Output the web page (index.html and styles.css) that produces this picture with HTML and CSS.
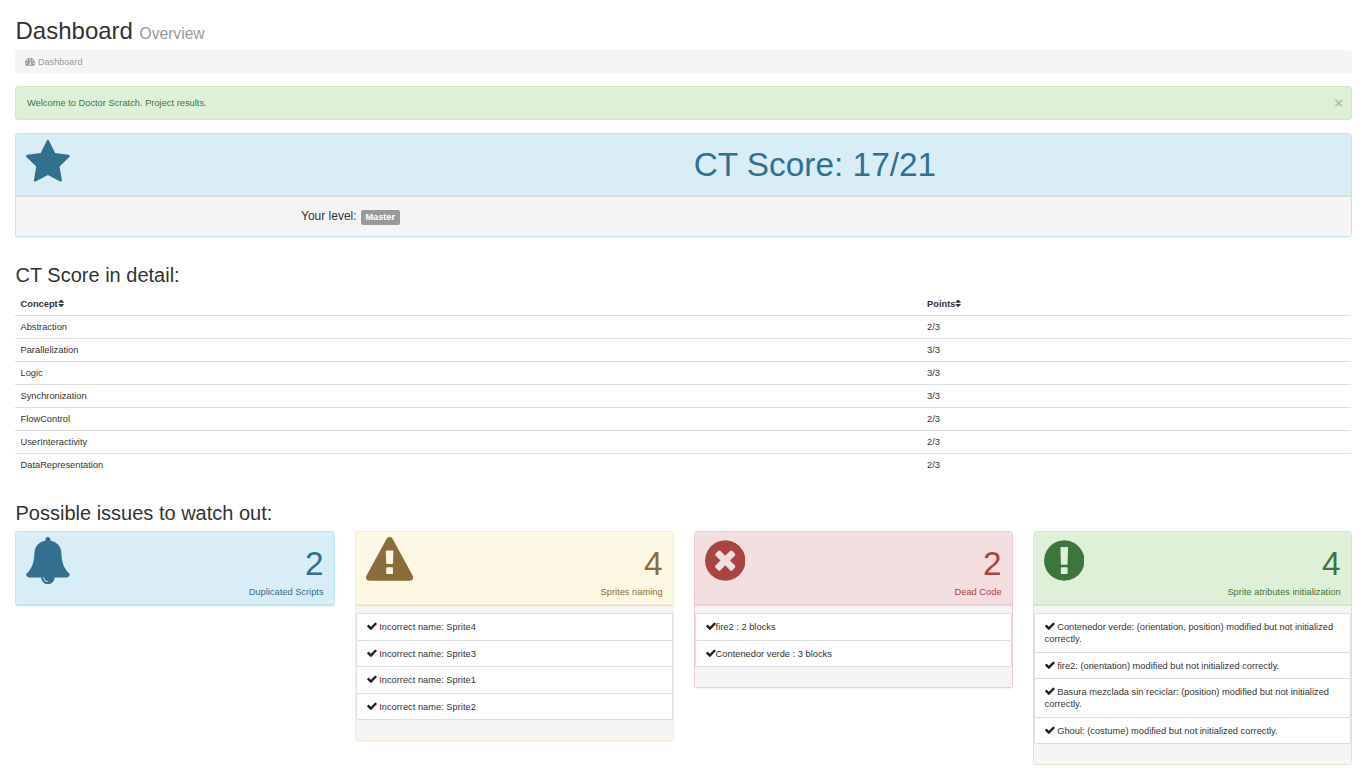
FILE: index.html
```html
<!DOCTYPE html>
<html lang="en">
<head>
    <meta charset="UTF-8">
    <meta name="viewport" content="width=device-width, initial-scale=1.0">
    <title>Doctor Scratch - Dashboard</title>
    <link rel="stylesheet" href="styles.css">
</head>
<body>
    <div class="page">
        <h1 class="page-title">Dashboard <small>Overview</small></h1>
        <div class="breadcrumb">
            <svg class="fa-dash" viewBox="0 128 1792 1536"><path fill="currentColor" d="M384 1152q0-53-37.500-90.500t-90.500-37.500-90.500 37.500-37.500 90.500 37.500 90.500 90.500 37.500 90.500-37.500 37.500-90.500zm192-448q0-53-37.500-90.500t-90.500-37.500-90.500 37.500-37.500 90.500 37.500 90.500 90.500 37.500 90.500-37.500 37.500-90.500zm428 481l101-382q6-26-7.500-48.500t-38.500-29.500-48 6.500-30 39.500l-101 382q-60 5-107 43.500t-63 98.500q-20 77 20 146t117 89 146-20 89-117q16-60-6-117t-72-91zm660-33q0-53-37.500-90.500t-90.500-37.500-90.500 37.500-37.500 90.500 37.500 90.500 90.500 37.500 90.500-37.500 37.500-90.500zm-640-640q0-53-37.500-90.500t-90.500-37.500-90.500 37.500-37.500 90.500 37.500 90.500 90.500 37.500 90.500-37.500 37.500-90.500zm448 192q0-53-37.500-90.500t-90.500-37.500-90.500 37.500-37.500 90.500 37.500 90.500 90.500 37.500 90.500-37.500 37.500-90.500zm320 448q0 261-141 483-19 29-54 29h-1402q-35 0-54-29-141-221-141-483 0-182 71-348t191-286 286-191 348-71 348 71 286 191 191 286 71 348z"/></svg>
            Dashboard
        </div>

        <div class="alert">
            <span>Welcome to Doctor Scratch. Project results.</span>
            <span class="close">&times;</span>
        </div>

        <div class="panel panel-info score-panel">
            <div class="panel-heading score-head">
                <svg class="big-icon" width="43.8" height="47.2" viewBox="64 0 1664 1792"><path fill="currentColor" d="M1728 647q0 22-26 48l-363 354 86 500q1 7 1 20 0 21-10.500 35.500t-30.500 14.500q-19 0-40-12l-449-236-449 236q-22 12-40 12-21 0-31.500-14.500t-10.500-35.500q0-6 2-20l86-500-364-354q-25-27-25-48 0-37 56-46l502-73 225-455q19-41 49-41t49 41l225 455 502 73q56 9 56 46z"/></svg>
                <div class="score-text">CT Score: 17/21</div>
            </div>
            <div class="panel-footer score-foot">
                Your level: <span class="label">Master</span>
            </div>
        </div>

        <h3 class="section-title detail-title">CT Score in detail:</h3>
        <table class="score-table">
            <thead>
                <tr>
                    <th class="concept-col">Concept<svg class="fa-sort" viewBox="320 256 1088 1344"><path fill="currentColor" d="M1408 1088q0 26-19 45l-448 448q-19 19-45 19t-45-19l-448-448q-19-19-19-45t19-45 45-19h896q26 0 45 19t19 45zm0-384q0 26-19 45t-45 19h-896q-26 0-45-19t-19-45 19-45l448-448q19-19 45-19t45 19l448 448q19 19 19 45z"/></svg></th>
                    <th>Points<svg class="fa-sort" viewBox="320 256 1088 1344"><path fill="currentColor" d="M1408 1088q0 26-19 45l-448 448q-19 19-45 19t-45-19l-448-448q-19-19-19-45t19-45 45-19h896q26 0 45 19t19 45zm0-384q0 26-19 45t-45 19h-896q-26 0-45-19t-19-45 19-45l448-448q19-19 45-19t45 19l448 448q19 19 19 45z"/></svg></th>
                </tr>
            </thead>
            <tbody>
                <tr><td>Abstraction</td><td>2/3</td></tr>
                <tr><td>Parallelization</td><td>3/3</td></tr>
                <tr><td>Logic</td><td>3/3</td></tr>
                <tr><td>Synchronization</td><td>3/3</td></tr>
                <tr><td>FlowControl</td><td>2/3</td></tr>
                <tr><td>UserInteractivity</td><td>2/3</td></tr>
                <tr><td>DataRepresentation</td><td>2/3</td></tr>
            </tbody>
        </table>

        <h3 class="section-title issues-title">Possible issues to watch out:</h3>
        <div class="issues">
            <div class="panel panel-info">
                <div class="panel-heading issue-head">
                    <svg class="big-icon" width="43.8" height="47.2" viewBox="64 0 1664 1792"><path fill="currentColor" d="M912 1696q0-16-16-16-59 0-101.500-42.500t-42.500-101.500q0-16-16-16t-16 16q0 73 51.500 124.500t124.500 51.500q16 0 16-16zm816-288q0 52-38 90t-90 38h-448q0 106-75 181t-181 75-181-75-75-181h-448q-52 0-90-38t-38-90q50-42 91-88t85-119.500 74.500-158.500 50-206 19.500-260q0-152 117-282.500t307-158.500q-8-19-8-39 0-40 28-68t68-28 68 28 28 68q0 20-8 39 190 28 307 158.500t117 282.500q0 139 19.500 260t50 206 74.500 158.500 85 119.500 91 88z"/></svg>
                    <div class="issue-count">
                        <div class="huge">2</div>
                        <div>Duplicated Scripts</div>
                    </div>
                </div>
            </div>

            <div class="panel panel-warning">
                <div class="panel-heading issue-head">
                    <svg class="big-icon" width="47.2" height="47.2" viewBox="0 0 1792 1792"><path fill="currentColor" d="M1024 1375v-190q0-14-9.500-23.500t-22.500-9.500h-192q-13 0-22.500 9.500t-9.500 23.500v190q0 14 9.500 23.500t22.500 9.500h192q13 0 22.500-9.500t9.500-23.500zm-2-374l18-459q0-12-10-19-13-11-24-11h-220q-11 0-24 11-10 7-10 21l17 457q0 10 10 16.500t24 6.500h185q14 0 23.500-6.500t10.500-16.500zm-14-934l768 1408q35 63-2 126-17 29-46.500 46t-63.500 17h-1536q-34 0-63.500-17t-46.500-46q-37-63-2-126l768-1408q17-31 47-49t65-18 65 18 47 49z"/></svg>
                    <div class="issue-count">
                        <div class="huge">4</div>
                        <div>Sprites naming</div>
                    </div>
                </div>
                <div class="panel-footer issue-foot">
                    <ul class="list-group">
                        <li class="list-item"><svg class="fa-check" viewBox="121 256 1550 1280"><path fill="currentColor" d="M1671 566q0 40-28 68l-724 724-136 136q-28 28-68 28t-68-28l-136-136-362-362q-28-28-28-68t28-68l136-136q28-28 68-28t68 28l294 295 656-657q28-28 68-28t68 28l136 136q28 28 28 68z"/></svg> Incorrect name: Sprite4</li>
                        <li class="list-item"><svg class="fa-check" viewBox="121 256 1550 1280"><path fill="currentColor" d="M1671 566q0 40-28 68l-724 724-136 136q-28 28-68 28t-68-28l-136-136-362-362q-28-28-28-68t28-68l136-136q28-28 68-28t68 28l294 295 656-657q28-28 68-28t68 28l136 136q28 28 28 68z"/></svg> Incorrect name: Sprite3</li>
                        <li class="list-item"><svg class="fa-check" viewBox="121 256 1550 1280"><path fill="currentColor" d="M1671 566q0 40-28 68l-724 724-136 136q-28 28-68 28t-68-28l-136-136-362-362q-28-28-28-68t28-68l136-136q28-28 68-28t68 28l294 295 656-657q28-28 68-28t68 28l136 136q28 28 28 68z"/></svg> Incorrect name: Sprite1</li>
                        <li class="list-item"><svg class="fa-check" viewBox="121 256 1550 1280"><path fill="currentColor" d="M1671 566q0 40-28 68l-724 724-136 136q-28 28-68 28t-68-28l-136-136-362-362q-28-28-28-68t28-68l136-136q28-28 68-28t68 28l294 295 656-657q28-28 68-28t68 28l136 136q28 28 28 68z"/></svg> Incorrect name: Sprite2</li>
                    </ul>
                </div>
            </div>

            <div class="panel panel-danger">
                <div class="panel-heading issue-head">
                    <svg class="big-icon" width="40.5" height="47.2" viewBox="128 0 1536 1792"><path fill="currentColor" d="M1277 1122q0-26-19-45l-181-181 181-181q19-19 19-45 0-27-19-46l-90-90q-19-19-46-19-26 0-45 19l-181 181-181-181q-19-19-45-19-27 0-46 19l-90 90q-19 19-19 46 0 26 19 45l181 181-181 181q-19 19-19 45 0 27 19 46l90 90q19 19 46 19 26 0 45-19l181-181 181 181q19 19 45 19 27 0 46-19l90-90q19-19 19-46zm387-226q0 209-103 385.500t-279.500 279.500-385.500 103-385.500-103-279.500-279.500-103-385.500 103-385.500 279.500-279.500 385.500-103 385.500 103 279.500 279.500 103 385.500z"/></svg>
                    <div class="issue-count">
                        <div class="huge">2</div>
                        <div>Dead Code</div>
                    </div>
                </div>
                <div class="panel-footer issue-foot">
                    <ul class="list-group">
                        <li class="list-item"><svg class="fa-check" viewBox="121 256 1550 1280"><path fill="currentColor" d="M1671 566q0 40-28 68l-724 724-136 136q-28 28-68 28t-68-28l-136-136-362-362q-28-28-28-68t28-68l136-136q28-28 68-28t68 28l294 295 656-657q28-28 68-28t68 28l136 136q28 28 28 68z"/></svg>fire2 : 2 blocks</li>
                        <li class="list-item"><svg class="fa-check" viewBox="121 256 1550 1280"><path fill="currentColor" d="M1671 566q0 40-28 68l-724 724-136 136q-28 28-68 28t-68-28l-136-136-362-362q-28-28-28-68t28-68l136-136q28-28 68-28t68 28l294 295 656-657q28-28 68-28t68 28l136 136q28 28 28 68z"/></svg>Contenedor verde : 3 blocks</li>
                    </ul>
                </div>
            </div>

            <div class="panel panel-success">
                <div class="panel-heading issue-head">
                    <svg class="big-icon" width="40.5" height="47.2" viewBox="128 0 1536 1792"><path fill="currentColor" d="M896 128q209 0 385.500 103t279.500 279.500 103 385.500-103 385.500-279.500 279.500-385.500 103-385.500-103-279.500-279.500-103-385.500 103-385.500 279.500-279.500 385.500-103zm128 1247v-190q0-14-9-23.500t-22-9.500h-192q-13 0-23 10t-10 23v190q0 13 10 23t23 10h192q13 0 22-9.500t9-23.500zm-2-344l18-621q0-12-10-18-10-8-24-8h-220q-14 0-24 8-10 6-10 18l17 621q0 10 10 17.500t24 7.500h185q14 0 23.500-7.500t10.500-17.500z"/></svg>
                    <div class="issue-count">
                        <div class="huge">4</div>
                        <div>Sprite atributes initialization</div>
                    </div>
                </div>
                <div class="panel-footer issue-foot">
                    <ul class="list-group">
                        <li class="list-item"><svg class="fa-check" viewBox="121 256 1550 1280"><path fill="currentColor" d="M1671 566q0 40-28 68l-724 724-136 136q-28 28-68 28t-68-28l-136-136-362-362q-28-28-28-68t28-68l136-136q28-28 68-28t68 28l294 295 656-657q28-28 68-28t68 28l136 136q28 28 28 68z"/></svg> Contenedor verde: (orientation, position) modified but not initialized correctly.</li>
                        <li class="list-item"><svg class="fa-check" viewBox="121 256 1550 1280"><path fill="currentColor" d="M1671 566q0 40-28 68l-724 724-136 136q-28 28-68 28t-68-28l-136-136-362-362q-28-28-28-68t28-68l136-136q28-28 68-28t68 28l294 295 656-657q28-28 68-28t68 28l136 136q28 28 28 68z"/></svg> fire2: (orientation) modified but not initialized correctly.</li>
                        <li class="list-item"><svg class="fa-check" viewBox="121 256 1550 1280"><path fill="currentColor" d="M1671 566q0 40-28 68l-724 724-136 136q-28 28-68 28t-68-28l-136-136-362-362q-28-28-28-68t28-68l136-136q28-28 68-28t68 28l294 295 656-657q28-28 68-28t68 28l136 136q28 28 28 68z"/></svg> Basura mezclada sin reciclar: (position) modified but not initialized correctly.</li>
                        <li class="list-item"><svg class="fa-check" viewBox="121 256 1550 1280"><path fill="currentColor" d="M1671 566q0 40-28 68l-724 724-136 136q-28 28-68 28t-68-28l-136-136-362-362q-28-28-28-68t28-68l136-136q28-28 68-28t68 28l294 295 656-657q28-28 68-28t68 28l136 136q28 28 28 68z"/></svg> Ghoul: (costume) modified but not initialized correctly.</li>
                    </ul>
                </div>
            </div>
        </div>
    </div>
</body>
</html>
```

FILE: styles.css
```css
* { box-sizing: border-box; }
body { margin: 0; font-family: "Liberation Sans", Arial, sans-serif; font-size: 9.300px; line-height: 12px; color: #333; background: #fff; }
.page { padding: 0 12px 0 15px; }

.page-title { margin: 0; padding: 17px 0 0 .5px; height: 50px; font-size: 24px; line-height: 28px; font-weight: 400; }
.page-title small { font-size: 15.600px; font-weight: 400; color: #999; }

.breadcrumb { height: 23px; padding: 0 10px; display: flex; align-items: center; gap: 3px; background: #f5f5f5; border-radius: 3px; color: #999; font-size: 9.100px; }
.fa-dash { width: 10px; height: 9px; }

.alert { display: flex; justify-content: space-between; align-items: center; height: 34px; margin-top: 13px; padding: 0 8px 0 11px; background: #dff0d8; border: 1px solid #d6e9c6; border-radius: 3px; color: #3c763d; }
.close { font-size: 15px; font-weight: 700; color: #000; opacity: .2; }

.panel { border: 1px solid transparent; border-radius: 3px; background: #fff; box-shadow: 0 1px 1px rgba(0, 0, 0, .05); }
.panel-heading { display: flex; padding: 0 10px; border-bottom: 1px solid transparent; border-radius: 2px 2px 0 0; }
.panel-footer { background: #f5f5f5; border-top: 1px solid #ddd; }
.panel-info { border-color: #bce8f1; }
.panel-info .panel-heading { background: #d9edf7; color: #31708f; border-bottom-color: #bce8f1; }
.panel-warning { border-color: #faebcc; }
.panel-warning .panel-heading { background: #fcf8e3; color: #8a6d3b; border-bottom-color: #faebcc; }
.panel-danger { border-color: #ebccd1; }
.panel-danger .panel-heading { background: #f2dede; color: #a94442; border-bottom-color: #ebccd1; }
.panel-success { border-color: #d6e9c6; }
.panel-success .panel-heading { background: #dff0d8; color: #3c763d; border-bottom-color: #d6e9c6; }

.big-icon { flex: none; margin-top: 5.400px; }

.score-panel { height: 104px; margin-top: 13px; }
.score-head { height: 62px; }
.score-text { flex: 1; padding: 11px 10px 0 229px; text-align: center; font-size: 33.400px; line-height: 40px; }
.score-foot { height: 40px; padding: 11px 0 0 285px; font-size: 12px; line-height: 16px; }
.label { display: inline-block; height: 15px; margin-left: 1px; padding: 0 4.500px; vertical-align: 0; background: #999; border-radius: 2px; color: #fff; font-size: 9.200px; line-height: 15px; font-weight: 700; }

.section-title { margin: 0; padding-left: .5px; font-size: 20px; line-height: 24px; font-weight: 400; }
.detail-title { margin-top: 26px; }
.issues-title { margin-top: 25px; }

.score-table { width: 1336px; margin-top: 6px; border-collapse: collapse; table-layout: fixed; }
.score-table th, .score-table td { padding: 5px 5px 5px 5.500px; text-align: left; border-top: 1px solid #ddd; }
.score-table th { border-top: 0; border-bottom: 1px solid #ddd; color: #333; }
.concept-col { width: 906.500px; }
.fa-sort { width: 6px; height: 7px; }

.issues { display: grid; grid-template-columns: 319.600px repeat(3, 319px); column-gap: 20px; align-items: start; margin-top: 6px; }
.issue-head { justify-content: space-between; height: 73px; }
.issue-count { padding-top: 11.500px; text-align: right; }
.huge { font-size: 33.400px; line-height: 40px; margin-bottom: 2.500px; }

.issue-foot { padding: 7.250px 0 19.750px; }
.list-group { margin: 0; padding: 0; list-style: none; }
.list-item { padding: 6.750px 10px; margin-bottom: -1px; background: #fff; border: 1px solid #ddd; border-radius: 2px; }
.list-item:last-child { margin-bottom: 0; }
.fa-check { width: 10px; height: 8px; color: #222; }
```
